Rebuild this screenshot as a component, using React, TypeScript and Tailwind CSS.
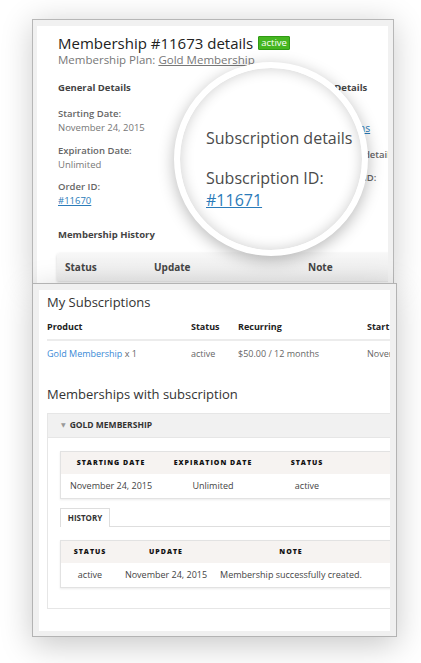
const font = { fontFamily: '"Open Sans", "DejaVu Sans", sans-serif' };

const Lens = () => {
  return (
    <div className="absolute left-[141px] top-[42px] h-[194px] w-[194px] rounded-full border-[6px] border-white bg-white shadow-[0_4px_16px_rgba(0,0,0,0.28),inset_0_0_14px_rgba(0,0,0,0.2)]">
      <div className="whitespace-nowrap pl-[26px] pt-[59px] text-[16px] font-medium text-[#4a4a4a]">
        <p className="leading-[22px]">Subscription details</p>
        <p className="mt-[18px] leading-[22px]">Subscription ID:</p>
        <p className="leading-[22px] text-[#2b7bb9] underline">#11671</p>
      </div>
    </div>
  );
};

const TopPanel = () => {
  return (
    <div className="relative h-[264px] w-[362px] border border-b-0 border-[#b7b7b7] bg-[#f1f1f1] pl-[4px] pr-[5px] pt-[6px] shadow-[0_4px_30px_rgba(0,0,0,0.2)]">
      <div className="h-full overflow-hidden bg-white pl-[21px] pt-[8px]">
        <div className="flex items-center">
          <h1 className="text-[15px] leading-[18px] text-[#222]">Membership #11673 details</h1>
          <span className="ml-[5px] rounded-[1px] border border-[#2f9a14] bg-[#45b620] px-[2px] text-[9.5px] leading-[12px] text-white">active</span>
        </div>
        <p className="text-[11.5px] leading-[16px] text-[#777]">
          Membership Plan: <span className="underline">Gold Membership</span>
        </p>
        <div className="mt-[14px] flex whitespace-nowrap text-[9.5px]">
          <div className="w-[246px] shrink-0">
            <p className="font-bold leading-[12px] text-[#444]">General Details</p>
            <p className="mt-[13px] font-semibold leading-[14px] text-[#666]">Starting Date:</p>
            <p className="leading-[14px] text-[#777]">November 24, 2015</p>
            <p className="mt-[9px] font-semibold leading-[14px] text-[#666]">Expiration Date:</p>
            <p className="leading-[14px] text-[#777]">Unlimited</p>
            <p className="mt-[8px] font-semibold leading-[14px] text-[#666]">Order ID:</p>
            <p className="leading-[14px] text-[#2b7bb9] underline">#11670</p>
          </div>
          <div className="shrink-0">
            <p className="font-bold leading-[12px] text-[#444]">Order Details</p>
            <p className="mt-[13px] font-semibold leading-[14px] text-[#666]">Order:</p>
            <p className="text-[10.5px] leading-[14px] text-[#2b7bb9] underline">Subscriptions</p>
            <p className="mt-[13px] font-semibold leading-[14px] text-[#666]">Subscription details</p>
            <p className="mt-[9px] font-semibold leading-[14px] text-[#666]">Subscription ID:</p>
            <p className="leading-[14px] text-[#2b7bb9] underline">#11671</p>
          </div>
        </div>
        <p className="mt-[20px] text-[9.5px] font-bold leading-[14px] text-[#444]">Membership History</p>
        <div className="-ml-px mt-[11px] flex h-[28px] w-[340px] items-center rounded-tl-[3px] bg-gradient-to-b from-[#f7f7f7] to-[#ebebeb] text-[10px] font-bold text-[#444] shadow-[0_1px_3px_rgba(0,0,0,0.18)]">
          <span className="w-[89px] shrink-0 pl-[8px]">Status</span>
          <span className="w-[154px] shrink-0 pl-[8px]">Update</span>
          <span className="pl-[8px]">Note</span>
        </div>
      </div>
      <Lens />
    </div>
  );
};

const BottomPanel = () => {
  return (
    <div className="relative w-[365px] border border-[#b3b3b3] bg-[#f0f0f0] pb-[5px] pl-[6px] pr-[6px] pt-[6px] shadow-[0_8px_30px_rgba(0,0,0,0.22)]">
      <div className="overflow-hidden bg-white pb-[22px] pl-[8px] pt-[4px]">
        <p className="text-[13px] leading-[16px] text-[#333]">My Subscriptions</p>
        <div className="mt-[11px] flex w-[360px] whitespace-nowrap border-b-2 border-[#ececec] pb-[6px] text-[9px] font-bold leading-[12px] text-[#222]">
          <span className="w-[144px] shrink-0">Product</span>
          <span className="w-[47px] shrink-0">Status</span>
          <span className="w-[129px] shrink-0">Recurring</span>
          <span className="shrink-0">Start date</span>
        </div>
        <div className="flex w-[360px] whitespace-nowrap pt-[7px] text-[9px] leading-[12px] text-[#666]">
          <span className="w-[144px] shrink-0">
            <span className="text-[#3a8ad6]">Gold Membership</span> x 1
          </span>
          <span className="w-[47px] shrink-0">active</span>
          <span className="w-[129px] shrink-0">$50.00 / 12 months</span>
          <span className="shrink-0">November 24, 2015</span>
        </div>
        <p className="mt-[26px] text-[13px] leading-[16px] text-[#333]">Memberships with subscription</p>
        <div className="mt-[11px] w-[370px] border border-[#e6e6e6]">
          <div className="flex h-[23px] items-center bg-[#f1f1f1] pl-[13px] text-[8.5px] font-bold text-[#333]">
            <span className="mr-[4px] text-[6px] text-[#999]">▼</span>
            GOLD MEMBERSHIP
          </div>
          <div className="border-t border-[#e6e6e6] pb-[20px] pl-[12px] pt-[13px]">
            <div className="border border-[#e2e2e2] shadow-[0_1px_2px_rgba(0,0,0,0.08)]">
              <div className="flex h-[22px] items-center whitespace-nowrap bg-[#f6f3f1] text-[7px] font-extrabold tracking-[1px] text-[#111]">
                <span className="w-[100px] shrink-0 text-center">STARTING DATE</span>
                <span className="w-[104px] shrink-0 text-center">EXPIRATION DATE</span>
                <span className="w-[84px] shrink-0 text-center">STATUS</span>
              </div>
              <div className="flex h-[24px] items-center whitespace-nowrap text-[9px] text-[#444]">
                <span className="w-[100px] shrink-0 text-center">November 24, 2015</span>
                <span className="w-[104px] shrink-0 text-center">Unlimited</span>
                <span className="w-[84px] shrink-0 text-center">active</span>
              </div>
            </div>
            <div className="mt-[9px] flex">
              <div className="flex h-[19px] w-[50px] items-center justify-center border border-b-0 border-[#dedede] text-[8px] font-bold text-[#333]">
                HISTORY
              </div>
              <div className="flex-1 border-b border-[#dedede]" />
            </div>
            <div className="mt-[13px] border border-[#e2e2e2] shadow-[0_1px_2px_rgba(0,0,0,0.08)]">
              <div className="flex h-[22px] items-center whitespace-nowrap bg-[#f6f3f1] text-[7px] font-extrabold tracking-[1px] text-[#111]">
                <span className="w-[58px] shrink-0 text-center">STATUS</span>
                <span className="w-[94px] shrink-0 text-center">UPDATE</span>
                <span className="w-[156px] shrink-0 text-center">NOTE</span>
              </div>
              <div className="flex h-[24px] items-center whitespace-nowrap text-[9px] text-[#444]">
                <span className="w-[58px] shrink-0 text-center">active</span>
                <span className="w-[94px] shrink-0 text-center">November 24, 2015</span>
                <span className="w-[156px] shrink-0 text-center">Membership successfully created.</span>
              </div>
            </div>
          </div>
        </div>
      </div>
    </div>
  );
};

const App = () => {
  return (
    <div className="h-[663px] w-[421px] bg-white pl-[32px] pt-[19px]" style={font}>
      <TopPanel />
      <BottomPanel />
    </div>
  );
};

export default App;
